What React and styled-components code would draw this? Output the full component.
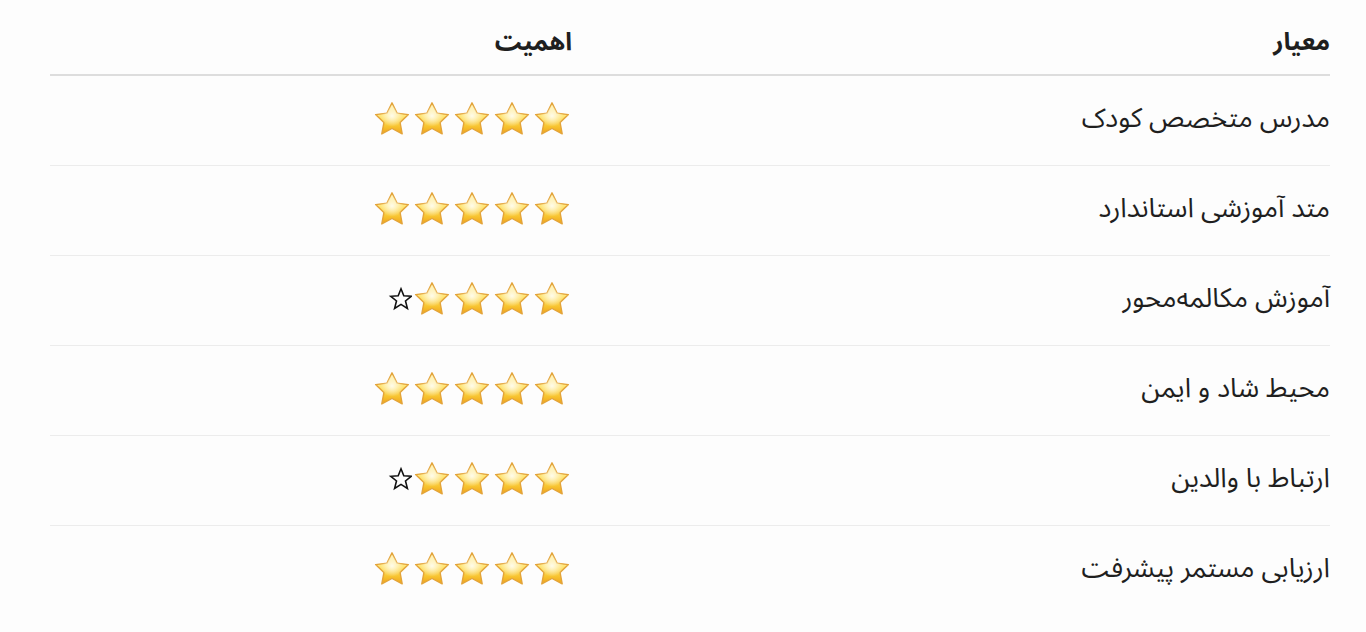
import React from 'react';
import styled, { createGlobalStyle } from 'styled-components';

const GlobalStyle = createGlobalStyle`
  body {
    margin: 0;
    background: #fdfdfd;
    font-family: "Noto Sans Arabic", "DejaVu Sans", sans-serif;
    color: #1f1f1f;
  }
`;

const Page = styled.div`
  padding: 10px 36px 0 50px;
  direction: rtl;
`;

const Table = styled.table`
  width: 100%;
  border-collapse: collapse;
  table-layout: fixed;
`;

const HeadCell = styled.th`
  text-align: right;
  font-size: 25px;
  font-weight: 700;
  height: 64px;
  padding: 0;
  border-bottom: 2px solid #dddddd;
  width: ${props => props.width || 'auto'};
`;

const Row = styled.tr`
  border-bottom: 1px solid #ececec;
  &:last-child {
    border-bottom: none;
  }
`;

const Cell = styled.td`
  height: 85px;
  padding: 0 0 4px;
  font-size: 27px;
  text-align: right;
  vertical-align: middle;
`;

const Stars = styled.div`
  display: flex;
  align-items: center;
  direction: rtl;
`;

const GoldStar = () => (
  <svg width="40" height="36" viewBox="0 0 40 36">
    <defs>
      <linearGradient id="gs" x1="0" y1="0" x2="0" y2="1">
        <stop offset="0%" stopColor="#fff6c4" />
        <stop offset="45%" stopColor="#ffe574" />
        <stop offset="75%" stopColor="#f8c530" />
        <stop offset="100%" stopColor="#eea21c" />
      </linearGradient>
      <radialGradient id="gh" cx="0.5" cy="0.42" r="0.35">
        <stop offset="0%" stopColor="#fffdf0" stopOpacity="0.95" />
        <stop offset="100%" stopColor="#fffdf0" stopOpacity="0" />
      </radialGradient>
    </defs>
    <path
      d="M20 1.8 L25 12.1 L36.4 13.6 L28.1 21.6 L30.2 32.9 L20 27.5 L9.8 32.9 L11.9 21.6 L3.6 13.6 L15 12.1 Z"
      fill="url(#gs)"
      stroke="#e3a43a"
      strokeWidth="1.4"
      strokeLinejoin="round"
    />
    <path
      d="M20 1.8 L25 12.1 L36.4 13.6 L28.1 21.6 L30.2 32.9 L20 27.5 L9.8 32.9 L11.9 21.6 L3.6 13.6 L15 12.1 Z"
      fill="url(#gh)"
    />
  </svg>
);

const EmptyStar = () => (
  <svg width="24" height="36" viewBox="0 0 24 36">
    <path
      d="M13 7.8 L15.8 14.8 L23.2 15.3 L17.5 20 L19.4 27.4 L13 23.4 L6.6 27.4 L8.5 20 L2.8 15.3 L10.2 14.8 Z"
      fill="none"
      stroke="#111"
      strokeWidth="1.6"
      strokeLinejoin="miter"
    />
  </svg>
);

const Rating = ({ value }) => (
  <Stars>
    {[1, 2, 3, 4, 5].map(i => (i <= value ? <GoldStar key={i} /> : <EmptyStar key={i} />))}
  </Stars>
);

const criteria = [
  { name: 'مدرس متخصص کودک', stars: 5 },
  { name: 'متد آموزشی استاندارد', stars: 5 },
  { name: 'آموزش مکالمه‌محور', stars: 4 },
  { name: 'محیط شاد و ایمن', stars: 5 },
  { name: 'ارتباط با والدین', stars: 4 },
  { name: 'ارزیابی مستمر پیشرفت', stars: 5 },
];

export default function App() {
  return (
    <Page>
      <GlobalStyle />
      <Table>
        <thead>
          <tr>
            <HeadCell width="758px">معیار</HeadCell>
            <HeadCell>اهمیت</HeadCell>
          </tr>
        </thead>
        <tbody>
          {criteria.map(c => (
            <Row key={c.name}>
              <Cell>{c.name}</Cell>
              <Cell>
                <Rating value={c.stars} />
              </Cell>
            </Row>
          ))}
        </tbody>
      </Table>
    </Page>
  );
}
